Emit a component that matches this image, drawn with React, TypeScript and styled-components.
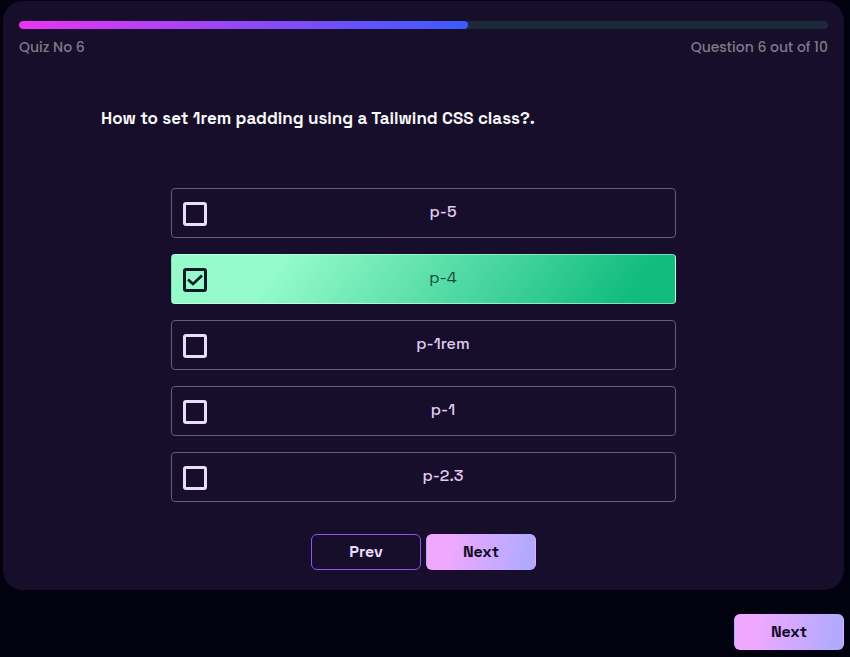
import React, { useState } from "react";
import styled, { createGlobalStyle } from "styled-components";

const GlobalStyle = createGlobalStyle`
  *, *::before, *::after { box-sizing: border-box; }
  body {
    margin: 0;
    background: #01010f;
    color: #e9d5ff;
    font-family: "Space Grotesk", Inter, sans-serif;
    font-size: 16px;
    line-height: 24px;
  }
  button, input { font: inherit; }
`;

const Page = styled.main`
  display: flex;
  flex-direction: column;
  gap: 24px;
  padding: 1px 6px 7px 3px;
`;

const Card = styled.section`
  display: flex;
  flex-direction: column;
  padding: 20px 16px;
  border-radius: 20px;
  background: #160e2b;
`;

const Track = styled.div`
  height: 8px;
  border-radius: 4px;
  overflow: hidden;
  background: #1e293b;
`;

const Bar = styled.div`
  height: 100%;
  border-radius: 4px;
  background: linear-gradient(90deg, #e935f1, #3b5bfc);
`;

const Meta = styled.div`
  display: flex;
  justify-content: space-between;
  padding-top: 8px;
  color: #807988;
  font-family: Poppins, Inter, sans-serif;
  font-size: 14px;
  font-weight: 500;
  line-height: 20px;
`;

const Question = styled.h1`
  margin: 48px 82px 0;
  color: #f8f8f8;
  font-size: 17px;
  font-weight: 600;
  line-height: 27px;
`;

const Options = styled.div`
  display: flex;
  flex-direction: column;
  gap: 16px;
  width: 100%;
  max-width: 505px;
  margin: 56px auto 32px;
`;

const Option = styled.label<{ $selected: boolean }>`
  display: flex;
  align-items: center;
  height: 50px;
  padding-left: 11px;
  border: 1px solid ${(p) => (p.$selected ? "rgba(233, 255, 245, 0.5)" : "#655c79")};
  border-radius: 4px;
  color: ${(p) => (p.$selected ? "#144a3f" : "#e0ccf2")};
  font-weight: ${(p) => (p.$selected ? 400 : 500)};
  background: ${(p) =>
    p.$selected ? "linear-gradient(126deg, #95fbcb 21%, #12bc7f 90%)" : "transparent"};
  cursor: pointer;
`;

const BoxCell = styled.span`
  display: grid;
  flex: none;
  width: 24px;
  height: 24px;
  margin-top: 2px;

  > * { grid-area: 1 / 1; }
`;

const Box = styled.input<{ $selected: boolean }>`
  appearance: none;
  width: 24px;
  height: 24px;
  margin: 0;
  border: 3px solid ${(p) => (p.$selected ? "#0b1a24" : "#eadcff")};
  border-radius: 3px;
  cursor: pointer;
`;

const Check = styled.svg`
  width: 24px;
  height: 24px;
  pointer-events: none;
`;

const OptionText = styled.span`
  flex: 1;
  padding: 0 0 2px 4px;
  text-align: center;
`;

const Actions = styled.div`
  display: flex;
  justify-content: center;
  gap: 5px;
`;

const Button = styled.button<{ $outline?: boolean }>`
  width: 110px;
  height: 36px;
  padding: 0;
  border: 1px solid ${(p) => (p.$outline ? "#9354ea" : "transparent")};
  border-radius: 6px;
  color: ${(p) => (p.$outline ? "#ecdcff" : "#100b24")};
  background: ${(p) =>
    p.$outline ? "transparent" : "linear-gradient(100deg, #f0a8ff 20%, #b2aaff 90%)"};
  font-size: 16px;
  font-weight: 700;
  line-height: 20px;
  cursor: pointer;
`;

const Footer = styled.footer`
  display: flex;
  justify-content: flex-end;
`;

const choices = ["p-5", "p-4", "p-1rem", "p-1", "p-2.3"];

export default function App() {
  const [selected, setSelected] = useState("p-4");
  const progress = 449 / 809;

  return (
    <>
      <GlobalStyle />
      <Page>
        <Card>
          <Track role="progressbar" aria-label="Quiz progress" aria-valuenow={6} aria-valuemin={0} aria-valuemax={10}>
            <Bar style={{ width: `${progress * 100}%` }} />
          </Track>
          <Meta>
            <span>Quiz No 6</span>
            <span>Question 6 out of 10</span>
          </Meta>
          <Question>How to set 1rem padding using a Tailwind CSS class?.</Question>
          <Options>
            {choices.map((choice) => {
              const on = choice === selected;
              return (
                <Option key={choice} $selected={on}>
                  <BoxCell>
                    <Box type="checkbox" checked={on} $selected={on} onChange={() => setSelected(choice)} />
                    {on && (
                      <Check viewBox="0 0 24 24" fill="none" aria-hidden="true">
                        <path d="M5 11.5 10 16 19 7.5" stroke="#0b1a24" strokeWidth="2.6" />
                      </Check>
                    )}
                  </BoxCell>
                  <OptionText>{choice}</OptionText>
                </Option>
              );
            })}
          </Options>
          <Actions>
            <Button type="button" $outline>Prev</Button>
            <Button type="button">Next</Button>
          </Actions>
        </Card>
        <Footer>
          <Button type="button">Next</Button>
        </Footer>
      </Page>
    </>
  );
}
